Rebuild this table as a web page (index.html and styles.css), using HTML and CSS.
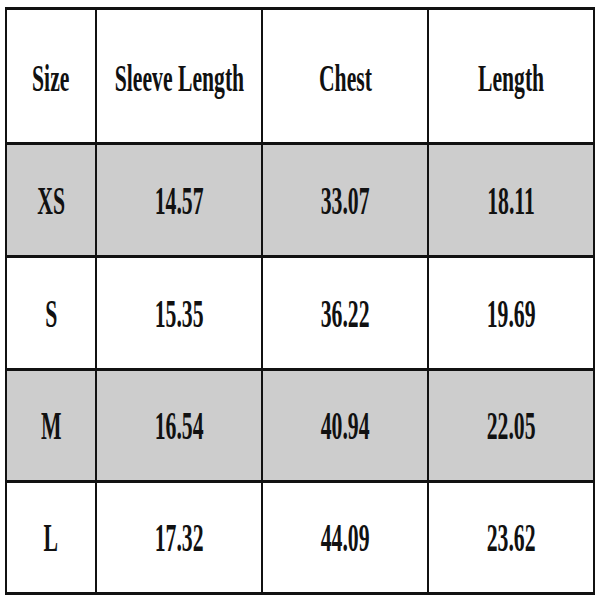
FILE: index.html
```html
<!DOCTYPE html>
<html>
<head>
<meta charset="utf-8">
<link rel="stylesheet" href="styles.css">
</head>
<body>
<div class="chart">
  <div class="cell head"><span>Size</span></div>
  <div class="cell head"><span>Sleeve Length</span></div>
  <div class="cell head"><span>Chest</span></div>
  <div class="cell head"><span>Length</span></div>

  <div class="cell gray"><span>XS</span></div>
  <div class="cell gray"><span>14.57</span></div>
  <div class="cell gray"><span>33.07</span></div>
  <div class="cell gray"><span>18.11</span></div>

  <div class="cell"><span>S</span></div>
  <div class="cell"><span>15.35</span></div>
  <div class="cell"><span>36.22</span></div>
  <div class="cell"><span>19.69</span></div>

  <div class="cell gray"><span>M</span></div>
  <div class="cell gray"><span>16.54</span></div>
  <div class="cell gray"><span>40.94</span></div>
  <div class="cell gray"><span>22.05</span></div>

  <div class="cell"><span>L</span></div>
  <div class="cell"><span>17.32</span></div>
  <div class="cell"><span>44.09</span></div>
  <div class="cell"><span>23.62</span></div>
</div>
</body>
</html>
```
FILE: styles.css
```css
html, body {
  margin: 0;
  padding: 0;
  background: #ffffff;
}
.chart {
  margin: 7px 0 0 5px;
  width: 586px;
  display: grid;
  grid-template-columns: 88px 164px 164px 164px;
  grid-template-rows: 132px 110px 110px 109px 109px;
  gap: 3px 2px;
  background: #111111;
  border-style: solid;
  border-color: #111111;
  border-width: 3px 2px 3px 2px;
  font-family: "Liberation Serif", "Times New Roman", serif;
  font-weight: bold;
  color: #111111;
}
.cell {
  background: #ffffff;
  display: flex;
  align-items: center;
  justify-content: center;
  font-size: 41px;
  line-height: 1;
}
.cell span {
  display: inline-block;
  white-space: nowrap;
  transform: scaleX(0.53);
}
.cell.gray {
  background: #cdcdcd;
}
.cell.head {
  font-size: 38px;
}
.cell.head span {
  transform: scaleX(0.57);
  position: relative;
  top: 2px;
}
```
